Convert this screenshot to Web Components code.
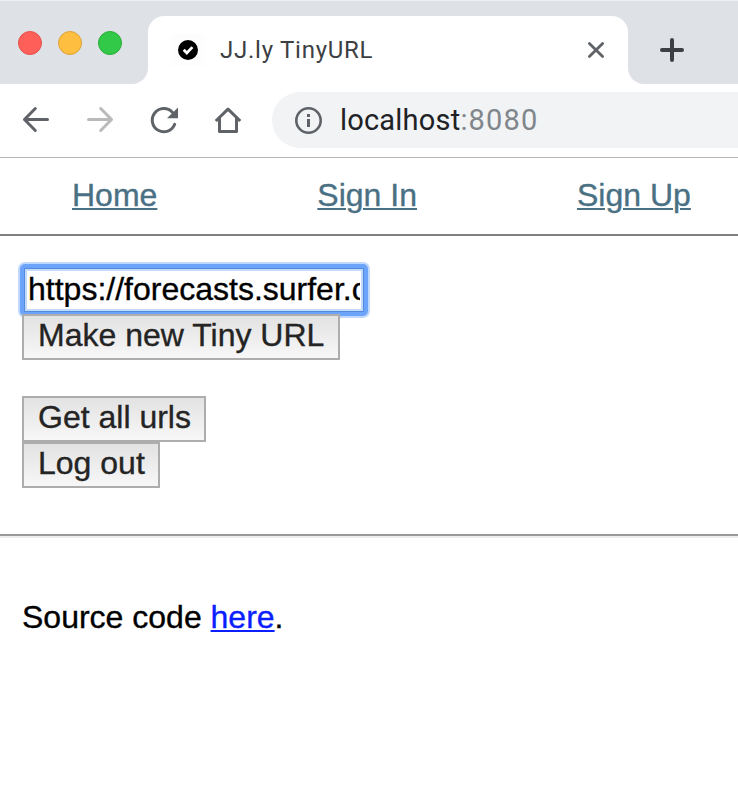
<!DOCTYPE html>
<html lang="en">
<head>
<meta charset="utf-8">
<title>JJ.ly TinyURL</title>
<style>
html, body { margin: 0; height: 786px; overflow: hidden; background: #fff; }
body { font: 32px/36px "Liberation Sans", Arial, sans-serif; color: #000; -webkit-text-stroke: .35px; }
</style>
</head>
<body>
<browser-tabs label="JJ.ly TinyURL"></browser-tabs>
<browser-toolbar><span slot="host">localhost</span><span slot="port">:8080</span></browser-toolbar>
<site-nav>
  <nav-link>Home</nav-link><nav-link>Sign In</nav-link><nav-link>Sign Up</nav-link>
</site-nav>
<url-panel>
  <url-field>https://forecasts.surfer.com</url-field>
  <push-button>Make new Tiny URL</push-button>
  <push-button style="margin-top:36px">Get all urls</push-button>
  <push-button>Log out</push-button>
</url-panel>
<page-footer>Source code <nav-link style="--link:#0a1eff">here</nav-link>.</page-footer>
<script>
const define = (name, html, setup) => customElements.define(name, class extends HTMLElement {
  constructor() {
    super();
    this.attachShadow({ mode: 'open' }).innerHTML = html;
  }
  connectedCallback() { if (setup) setup(this); }
});

define('browser-tabs', `
<style>
:host { display: flex; height: 84px; background: linear-gradient(#eceef0 0 1px, transparent 1px), linear-gradient(#dee1e6, #dee1e6) 0 0 / 100% 50px no-repeat, #fff; box-sizing: border-box; }
.lights { box-sizing: border-box; width: 148px; background: #dee1e6; border-bottom-right-radius: 16px; display: flex; gap: 16px; padding: 30px 0 0 18px; border-top: 1px solid #eceef0; }
i { box-sizing: border-box; width: 24px; height: 24px; border-radius: 50%; border: 1px solid; }
.r { background: #fe5f58; border-color: #e4504b; }
.y { background: #febe3f; border-color: #dca23a; }
.g { background: #33c948; border-color: #29ad38; }
.tab { box-sizing: border-box; width: 480px; height: 68px; margin-top: 16px; background: #fff; border-radius: 16px 16px 0 0; display: flex; align-items: center; padding: 0 20px 0 24px; }
.fav { width: 32px; height: 32px; background: #fdfdfd; flex: none; }
.title { font: 24px/32px Roboto, sans-serif; color: #3c4043; margin-left: 16px; flex: 1; letter-spacing: .75px; white-space: nowrap; -webkit-text-stroke: 0; }
.rest { flex: 1; background: #dee1e6; border-bottom-left-radius: 16px; border-top: 1px solid #eceef0; }
svg { display: block; }
</style>
<div class="lights"><i class="r"></i><i class="y"></i><i class="g"></i></div>
<div class="tab">
  <svg class="fav" viewBox="0 0 32 32"><circle cx="16" cy="16" r="10" fill="#000"/><path d="M11.7 15.8l3.1 3.1 5.6-5.8" fill="none" stroke="#fff" stroke-width="2.8"/></svg>
  <span class="title"></span>
  <svg width="24" height="24" viewBox="0 0 24 24"><path d="M5.4 5.4l13.2 13.2M18.6 5.4L5.4 18.6" stroke="#5f6368" stroke-width="2.8" stroke-linecap="round"/></svg>
</div>
<div class="rest"><svg width="88" height="83" viewBox="0 0 88 83"><path d="M44 39v20M34 49h20" stroke="#3c4043" stroke-width="4" stroke-linecap="round"/></svg></div>`,
el => { el.shadowRoot.querySelector('.title').textContent = el.getAttribute('label'); });

define('browser-toolbar', `
<style>
:host { display: flex; box-sizing: border-box; height: 74px; padding: 8px 0 9px 20px; border-bottom: 1px solid #b4b5b7; background: #fff; align-items: center; }
svg { flex: none; fill: none; stroke: #5f6368; stroke-width: 3; }
.icons { display: flex; gap: 32px; }
.omni { margin-left: 28px; flex: 1; height: 56px; border-radius: 28px 0 0 28px; background: #f1f3f4; display: flex; align-items: center; padding-left: 20px; font: 29px/56px Roboto, sans-serif; letter-spacing: .57px; color: #202124; -webkit-text-stroke: 0; }
.text { margin-left: 15px; white-space: nowrap; }
.port { color: #80868b; }
::slotted([slot=host]) { letter-spacing: .2px; }
::slotted([slot=port]) { letter-spacing: 1.2px; }
</style>
<div class="icons">
<svg width="32" height="32" viewBox="0 0 32 32"><path d="M15.3 4.5L4.5 15.5l10.8 11M4.5 15.5h23" stroke-linecap="round" stroke-linejoin="round"/></svg>
<svg width="32" height="32" viewBox="0 0 32 32" style="stroke:#bababa"><path d="M16.7 4.5l10.8 11-10.8 11M27.5 15.5h-23" stroke-linecap="round" stroke-linejoin="round"/></svg>
<svg width="32" height="32" viewBox="0 0 32 32"><path d="M26.7 20.3A11.6 11.6 0 1 1 24.3 8.2" stroke-linecap="round"/><path d="M30 3.5v10.7H19z" fill="#5f6368" stroke="none"/></svg>
<svg width="32" height="32" viewBox="0 0 32 32"><path d="M7.5 15v12.5h17V15M4.8 16L16 5.1 27.2 16" stroke-linejoin="round" stroke-linecap="square" stroke-width="3"/></svg>
</div>
<div class="omni"><svg width="33" height="32" viewBox="0 0 33 32"><circle cx="16.5" cy="16.5" r="12.2" stroke-width="2.6"/><path d="M16.5 15v8M16.5 10v3" stroke-width="3"/></svg><span class="text"><slot name="host"></slot><span class="port"><slot name="port"></slot></span></span></div>`);

define('site-nav', `
<style>
:host { display: flex; box-sizing: border-box; height: 78px; border-bottom: 2px solid #808080; gap: 160px; padding: 19px 0 0 72px; --link: #4a7083; }
</style><slot></slot>`);

define('nav-link', `
<style>
:host { display: inline-block; white-space: nowrap; }
a { color: var(--link); text-decoration: underline; text-decoration-thickness: 2px; text-underline-offset: 2px; }
</style><a href="#"><slot></slot></a>`);

define('url-panel', `
<style>
:host { display: flex; flex-direction: column; align-items: flex-start; box-sizing: border-box; height: 302px; padding: 30px 22px 0; border-bottom: 2px solid #eee; box-shadow: inset 0 -2px #999; }
</style><slot></slot>`);

define('url-field', `
<style>
:host { display: block; box-sizing: border-box; width: 344px; height: 48px; padding: 5px; isolation: isolate; }
div { box-sizing: border-box; width: 334px; height: 38px; padding: 0 1px; background: #fff;
  box-shadow: 0 0 0 2px #c3dafa, 0 0 0 3px #4f8be2; position: relative; }
div::before { content: ""; position: absolute; z-index: -1; inset: -7px; border-radius: 5px; background: #6ba4f8; box-shadow: 0 0 0 2px #bfd8fb; }
span { display: block; overflow: hidden; white-space: nowrap; line-height: 36px; }
</style><div><span><slot></slot></span></div>`);

define('push-button', `
<style>
:host { display: block; position: relative; }
button { display: block; box-sizing: border-box; height: 46px; margin: 0; padding: 0 13.4px 4px 14px; border: 2px solid #adadad; border-radius: 0; background: linear-gradient(#e2e2e2, #f7f7f7); color: #242424; font: inherit; line-height: 38px; white-space: nowrap; -webkit-text-stroke: .35px; }
</style><button><slot></slot></button>`);

define('page-footer', `
<style>:host { display: block; padding: 61px 22px 0; }</style><slot></slot>`);
</script>
</body>
</html>
